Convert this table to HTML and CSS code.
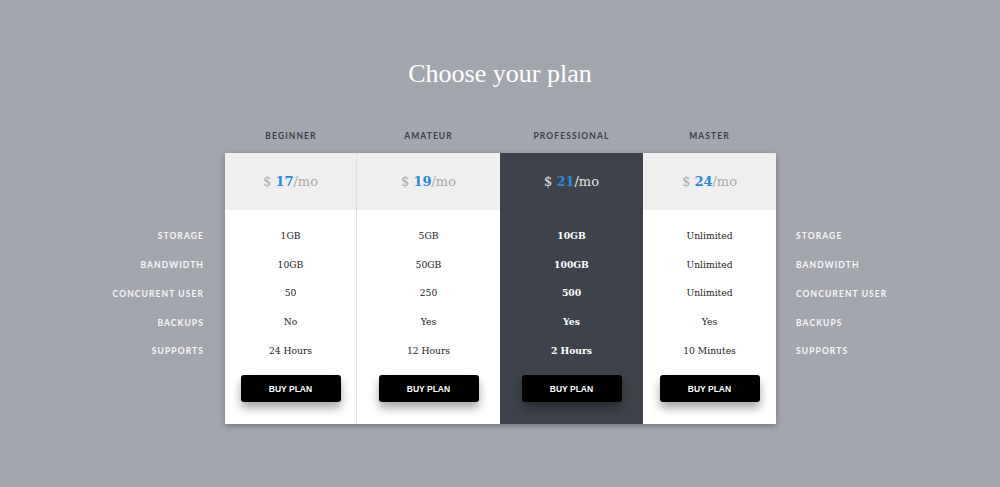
FILE: index.html
```html
<!DOCTYPE html>
<html lang="en">
<head>
<meta charset="utf-8">
<title>Choose your plan</title>
<link rel="stylesheet" href="styles.css">
</head>
<body>
<main class="page">
  <h1 class="title">Choose your plan</h1>
  <div class="pricing">
    <ul class="labels labels-left">
      <li>Storage</li>
      <li>Bandwidth</li>
      <li>Concurent User</li>
      <li>Backups</li>
      <li>Supports</li>
    </ul>
    <div class="plans">
      <div class="names">
        <div class="name col-a">Beginner</div>
        <div class="name col-b">Amateur</div>
        <div class="name col-c">Professional</div>
        <div class="name col-d">Master</div>
      </div>
      <div class="card">
        <div class="plan col-a sep">
          <div class="price">$ <b>17</b>/mo</div>
          <ul class="features"><li>1GB</li><li>10GB</li><li>50</li><li>No</li><li>24 Hours</li></ul>
          <div class="action"><button class="buy">BUY PLAN</button></div>
        </div>
        <div class="plan col-b">
          <div class="price">$ <b>19</b>/mo</div>
          <ul class="features"><li>5GB</li><li>50GB</li><li>250</li><li>Yes</li><li>12 Hours</li></ul>
          <div class="action"><button class="buy">BUY PLAN</button></div>
        </div>
        <div class="plan col-c featured">
          <div class="price">$ <b>21</b>/mo</div>
          <ul class="features"><li>10GB</li><li>100GB</li><li>500</li><li>Yes</li><li>2 Hours</li></ul>
          <div class="action"><button class="buy">BUY PLAN</button></div>
        </div>
        <div class="plan col-d">
          <div class="price">$ <b>24</b>/mo</div>
          <ul class="features"><li>Unlimited</li><li>Unlimited</li><li>Unlimited</li><li>Yes</li><li>10 Minutes</li></ul>
          <div class="action"><button class="buy">BUY PLAN</button></div>
        </div>
      </div>
    </div>
    <ul class="labels labels-right">
      <li>Storage</li>
      <li>Bandwidth</li>
      <li>Concurent User</li>
      <li>Backups</li>
      <li>Supports</li>
    </ul>
  </div>
</main>
</body>
</html>
```
FILE: styles.css
```css
* { box-sizing: border-box; }
html, body { margin: 0; padding: 0; }
body {
  background: #a4a6ae;
  font-family: "Liberation Sans", Arial, sans-serif;
  height: 487px;
  overflow: hidden;
}
ul { list-style: none; margin: 0; padding: 0; }
.page { padding-top: 54px; }
.title {
  margin: 0;
  font-family: "Liberation Serif", "Times New Roman", serif;
  font-weight: normal;
  font-size: 26px;
  line-height: 40px;
  color: #ffffff;
  text-align: center;
}
.pricing {
  display: flex;
  margin-top: 23px;
}
.labels {
  width: 225px;
  padding-top: 105px;
  font-family: Lato, "Open Sans", sans-serif;
  font-weight: 700;
  font-size: 8.5px;
  letter-spacing: 1.1px;
  text-transform: uppercase;
  color: #f7f7f7;
}
.labels li {
  height: 28.75px;
  display: flex;
  align-items: center;
}
.labels-left { padding-right: 21px; }
.labels-left li { justify-content: flex-end; }
.labels-right { padding-left: 20px; flex: 1; }
.plans { width: 551px; }
.names { display: flex; height: 36px; padding-top: 2px; }
.name {
  display: flex;
  align-items: center;
  justify-content: center;
  font-family: Lato, "Open Sans", sans-serif;
  font-weight: 700;
  font-size: 8.5px;
  letter-spacing: 1.1px;
  text-transform: uppercase;
  color: #3b3e45;
}
.col-a { width: 132px; }
.col-b { width: 143px; }
.col-c { width: 143px; }
.col-d { width: 133px; }
.card {
  display: flex;
  background: #ffffff;
  box-shadow: 0 2px 6px rgba(0, 0, 0, 0.3);
}
.sep { border-right: 1px solid #e2e2e2; }
.price {
  height: 57px;
  display: flex;
  align-items: center;
  justify-content: center;
  background: #efefef;
  font-family: "DejaVu Serif", serif;
  font-size: 13px;
  color: #a9a9a9;
  white-space: pre;
}
.price b { color: #2b88dc; font-weight: 700; }
.features { padding-top: 11px; }
.features li {
  height: 28.75px;
  display: flex;
  align-items: center;
  justify-content: center;
  font-family: "DejaVu Serif", serif;
  font-size: 9.2px;
  color: #222222;
}
.action {
  display: flex;
  justify-content: center;
  padding: 10.6px 0 22px;
}
.buy {
  width: 100px;
  height: 27px;
  border: 0;
  border-radius: 3px;
  background: #000000;
  color: #ffffff;
  font-family: "Liberation Sans", Arial, sans-serif;
  font-weight: 700;
  font-size: 8.5px;
  box-shadow: 0 6px 10px rgba(0, 0, 0, 0.35);
  padding: 0;
}
.featured { background: #3e434b; }
.featured .price { background: #3e434b; color: #e4e4e4; }
.featured .price b { color: #2b88dc; }
.featured .features li { color: #ffffff; font-weight: 700; }
```
